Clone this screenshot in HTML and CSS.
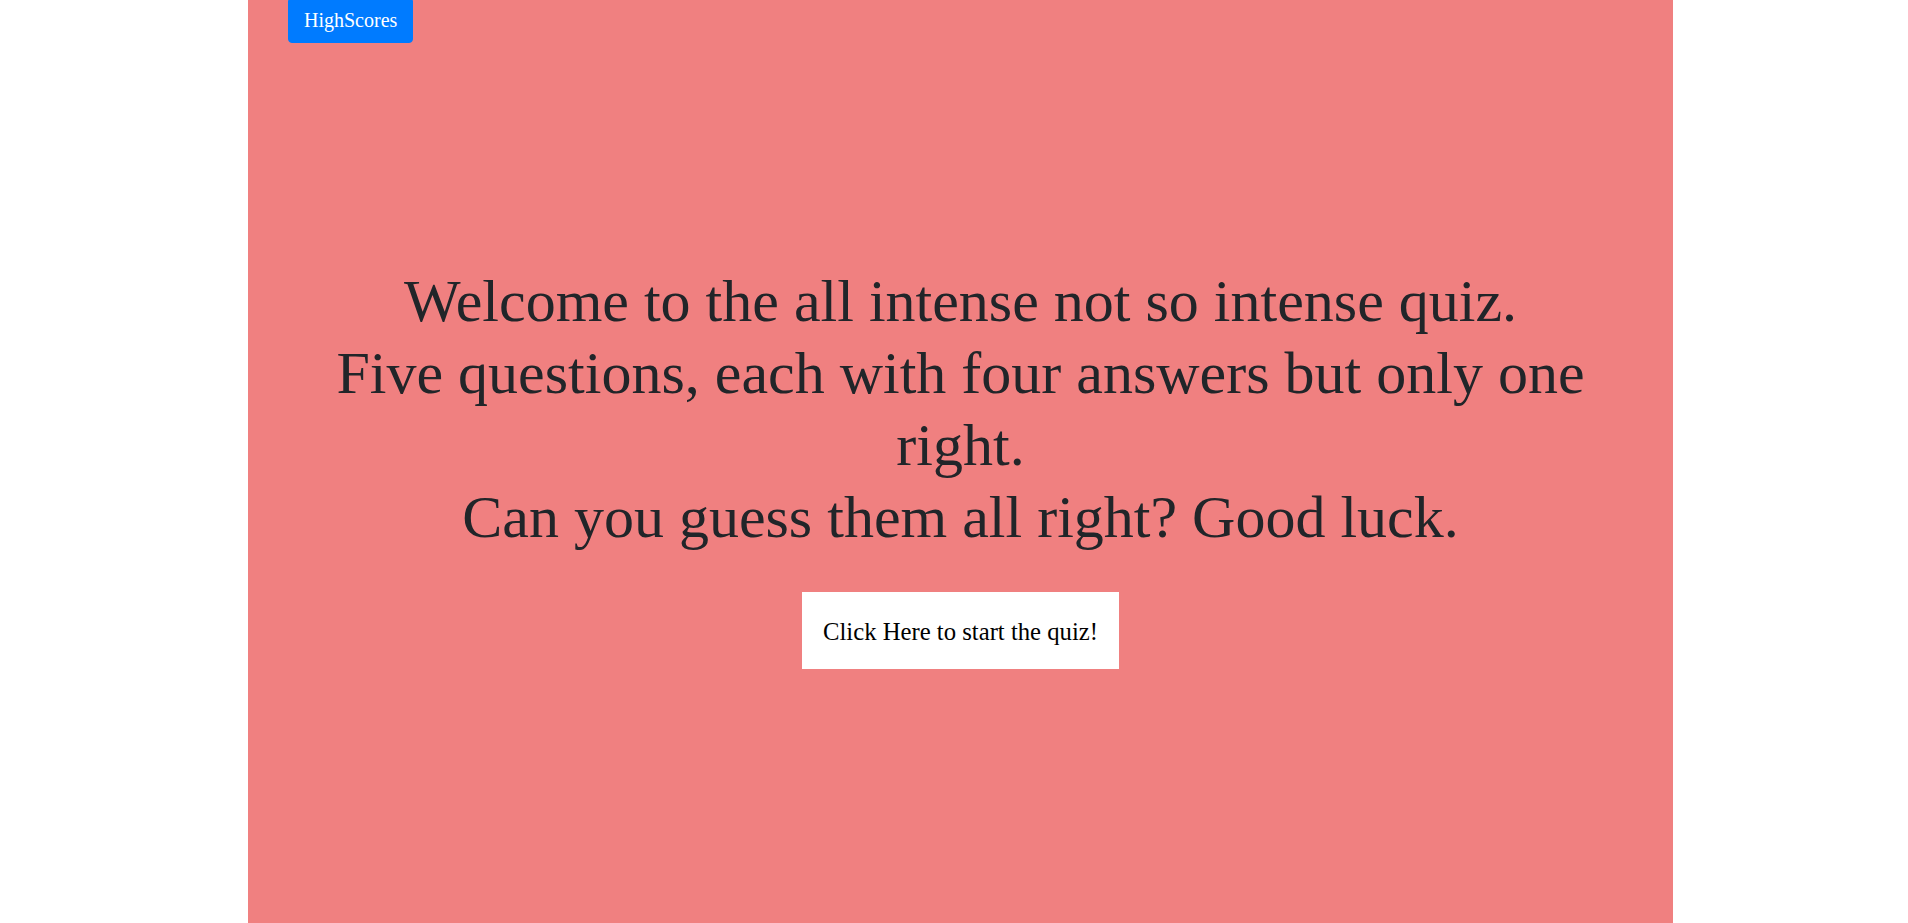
FILE: index.html
```html
<!DOCTYPE html>
<html>
<head>
<meta charset="utf-8">
<link rel="stylesheet" href="styles.css">
</head>
<body>
<div class="page">
  <div class="topbar">
    <button class="btn-scores">HighScores</button>
  </div>
  <h1 class="intro">Welcome to the all intense not so intense quiz.<br>Five questions, each with four answers but only one right.<br>Can you guess them all right? Good luck.</h1>
  <div class="start-wrap">
    <button class="btn-start">Click Here to start the quiz!</button>
  </div>
</div>
</body>
</html>
```

FILE: styles.css
```css
html, body {
  margin: 0;
  padding: 0;
  height: 100%;
  background: #ffffff;
}
body {
  font-family: "Liberation Serif", "Times New Roman", serif;
}
.page {
  box-sizing: border-box;
  margin-left: 248px;
  width: 1425px;
  min-height: 100%;
  background: #f08080;
  display: flex;
  flex-direction: column;
}
.topbar {
  display: flex;
  padding-left: 40px;
}
.btn-scores {
  font-family: "Liberation Serif", "Times New Roman", serif;
  font-size: 20px;
  line-height: 30px;
  color: #ffffff;
  background: #007bff;
  border: 1px solid #007bff;
  border-radius: 0 0 4px 4px;
  padding: 3.5px 15px 7.5px;
  margin: 0;
  cursor: pointer;
}
.intro {
  margin: 222px 0 0;
  padding: 0 40px;
  font-size: 60px;
  font-weight: normal;
  line-height: 72px;
  text-align: center;
  color: #212529;
}
.start-wrap {
  display: flex;
  justify-content: center;
  margin-top: 39px;
}
.btn-start {
  font-family: "Liberation Serif", "Times New Roman", serif;
  font-size: 24.7px;
  line-height: 29px;
  color: #000000;
  background: #ffffff;
  border: none;
  padding: 25px 21px 23px;
  margin: 0;
  cursor: pointer;
}
```
